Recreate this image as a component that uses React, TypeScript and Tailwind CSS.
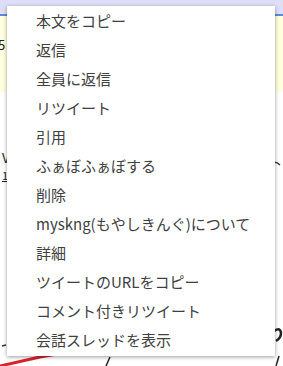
const items = [
  '本文をコピー',
  '返信',
  '全員に返信',
  'リツイート',
  '引用',
  'ふぁぼふぁぼする',
  '削除',
  'myskng(もやしきんぐ)について',
  '詳細',
  'ツイートのURLをコピー',
  'コメント付きリツイート',
  '会話スレッドを表示',
]

const font = { fontFamily: '"Noto Sans CJK JP", "Noto Sans", sans-serif' }

const Background = () => (
  <div className="flex flex-col w-[283px] h-[366px] bg-white overflow-hidden">
    <div className="h-[14px] bg-[#dedef9]" />
    <div className="h-[2px] bg-[#5d8ad6]" />
    <div className="h-[76px] bg-[#ffffdf] flex items-start pt-[21px]">
      <span className="text-[13px] leading-[16px] text-[#222] -ml-[2px]" style={font}>
        5
      </span>
    </div>
    <div className="flex flex-col pt-[58px] pl-[2px] gap-[3px]">
      <span className="text-[13px] leading-[16px] text-[#222]" style={font}>
        V
      </span>
      <span className="text-[11px] leading-[12px] text-[#222] underline" style={font}>
        1.
      </span>
    </div>
  </div>
)

const Strokes = () => (
  <svg className="absolute inset-0" width="283" height="366" viewBox="0 0 283 366">
    <path d="M0 366 L40 357 L80 350" stroke="#d8232a" strokeWidth="3" fill="none" />
    <path d="M106 366 L110 357" stroke="#222" strokeWidth="1.5" fill="none" />
    <path d="M2 346 L6 345" stroke="#333" strokeWidth="1.5" fill="none" />
    <path d="M272 163 Q276 161 280 165" stroke="#333" strokeWidth="1.5" fill="none" />
    <path d="M273 332 Q280 326 281 333 Q281 338 276 341" stroke="#222" strokeWidth="2.5" fill="none" />
    <path d="M276 366 L279 356" stroke="#222" strokeWidth="1.5" fill="none" />
  </svg>
)

const ContextMenu = () => (
  <div
    className="absolute left-[7px] top-[6px] w-[268px] bg-white py-[1px] shadow-[0_1px_4px_rgba(0,0,0,0.4)]"
    style={font}
  >
    {items.map((label) => (
      <div
        key={label}
        className="h-[29px] flex items-center pl-[29px] text-[15px] text-[#404040] whitespace-nowrap"
      >
        {label}
      </div>
    ))}
  </div>
)

export default function App() {
  return (
    <div className="relative w-[283px] h-[366px] overflow-hidden">
      <Background />
      <Strokes />
      <ContextMenu />
    </div>
  )
}
